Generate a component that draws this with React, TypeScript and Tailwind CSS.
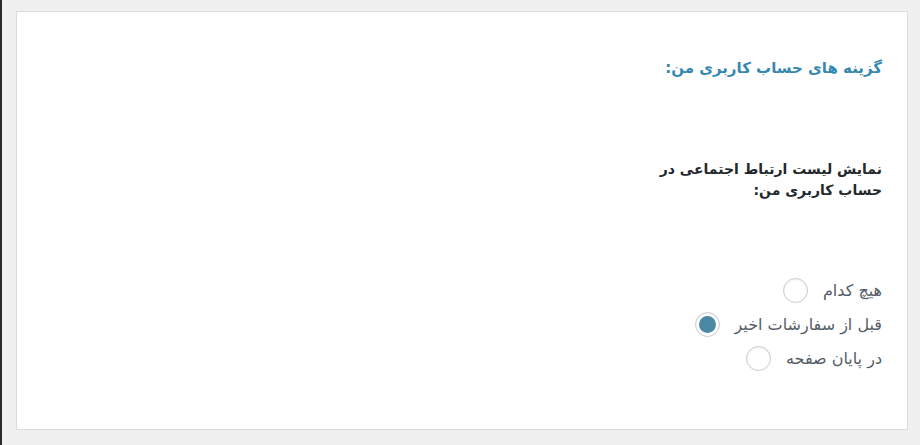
import React, { useState } from 'react';

const options = [
  { value: 'none', label: 'هیچ کدام' },
  { value: 'before', label: 'قبل از سفارشات اخیر' },
  { value: 'end', label: 'در پایان صفحه' },
];

export default function App() {
  const [position, setPosition] = useState('before');

  return (
    <div
      className="w-[920px] h-[445px] bg-[#f0f0f0] border-l-2 border-[#2b2b2b] pt-[11px] pl-[14px]"
      style={{ fontFamily: '"DejaVu Sans", sans-serif' }}
    >
      <div dir="rtl" className="w-[892px] h-[419px] bg-white border border-[#dcdcdc]">
        {/* Section title */}
        <div className="h-[109px] pr-[25px] pt-[46px]">
          <h2 className="text-[15px] leading-[20px] font-bold text-[#3688b0]">گزینه های حساب کاربری من:</h2>
        </div>

        {/* Setting row */}
        <div className="pr-[25px] pt-[38px]">
          <p className="w-[240px] text-[14px] leading-[21px] font-bold text-[#23282d]">
            نمایش لیست ارتباط اجتماعی در حساب کاربری من:
          </p>

          <div className="mt-[77px] flex flex-col gap-[9px]">
            {options.map(option => (
              <label
                key={option.value}
                className="flex items-center gap-[15px] cursor-pointer text-[16px] leading-[25px] text-[#555d66]"
                onClick={() => setPosition(option.value)}
              >
                <span>{option.label}</span>
                <span className="w-[25px] h-[25px] rounded-full border border-[#c8ccd0] bg-white flex items-center justify-center shadow-[inset_0_1px_2px_rgba(0,0,0,0.07)]">
                  {position === option.value && (
                    <span className="w-[17px] h-[17px] rounded-full bg-[#4a88a5]" />
                  )}
                </span>
              </label>
            ))}
          </div>
        </div>
      </div>
    </div>
  );
}
